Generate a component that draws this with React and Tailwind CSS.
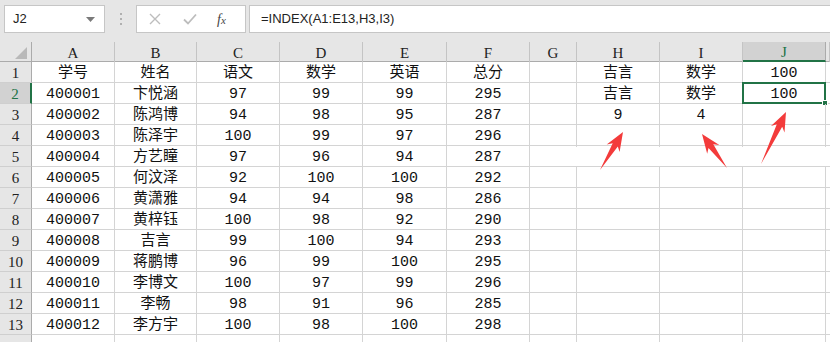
import React from "react";

const cols = ["A", "B", "C", "D", "E", "F", "G", "H", "I", "J", ""];

const rows = [
  ["学号", "姓名", "语文", "数学", "英语", "总分", "", "吉言", "数学", "100"],
  ["400001", "卞悦涵", "97", "99", "99", "295", "", "吉言", "数学", "100"],
  ["400002", "陈鸿博", "94", "98", "95", "287", "", "9", "4", ""],
  ["400003", "陈泽宇", "100", "99", "97", "296", "", "", "", ""],
  ["400004", "方艺瞳", "97", "96", "94", "287", "", "", "", ""],
  ["400005", "何汶泽", "92", "100", "100", "292", "", "", "", ""],
  ["400006", "黄潇雅", "94", "94", "98", "286", "", "", "", ""],
  ["400007", "黄梓钰", "100", "98", "92", "290", "", "", "", ""],
  ["400008", "吉言", "99", "100", "94", "293", "", "", "", ""],
  ["400009", "蒋鹏博", "96", "99", "100", "295", "", "", "", ""],
  ["400010", "李博文", "100", "97", "99", "296", "", "", "", ""],
  ["400011", "李畅", "98", "91", "96", "285", "", "", "", ""],
  ["400012", "李方宇", "100", "98", "100", "298", "", "", "", ""],
  ["", "", "", "", "", "", "", "", "", ""],
];

const gridCols = "grid grid-cols-[32px_83px_82px_83px_83px_84px_83px_47px_83px_83px_83px_1fr]";

// tapered hand-drawn style arrow, tip (tx,ty) tail (sx,sy)
function arrowPoints(tx, ty, sx, sy) {
  const dx = tx - sx;
  const dy = ty - sy;
  const len = Math.hypot(dx, dy);
  const ux = dx / len;
  const uy = dy / len;
  const nx = -uy;
  const ny = ux;
  const head = 17;
  const hw = 7.5;
  const sw = 3;
  const bx = tx - ux * head;
  const by = ty - uy * head;
  const pts = [
    [sx, sy],
    [bx + nx * sw + ux * 2, by + ny * sw + uy * 2],
    [bx + nx * hw - ux * 2, by + ny * hw - uy * 2],
    [tx, ty],
    [bx - nx * hw - ux * 2, by - ny * hw - uy * 2],
    [bx - nx * sw + ux * 2, by - ny * sw + uy * 2],
  ];
  return pts.map((p) => p.map((v) => v.toFixed(1)).join(",")).join(" ");
}

function FormulaBar() {
  return (
    <div className="h-[42px] bg-[#e6e6e6] flex items-start pt-[5px] font-['Liberation_Sans',sans-serif] text-[13px] text-[#222]">
      <div className="ml-[4px] w-[101px] h-[28px] bg-white border border-[#c6c6c6] flex items-center justify-between pl-[8px] pr-[9px]">
        <span>J2</span>
        <svg width="9" height="5" viewBox="0 0 9 5">
          <path d="M0 0 H9 L4.5 5 Z" fill="#7a7a7a" />
        </svg>
      </div>
      <div className="w-[31px] h-[28px] flex flex-col items-center justify-center gap-[3px]">
        <span className="w-[2px] h-[2px] bg-[#b0b0b0]" />
        <span className="w-[2px] h-[2px] bg-[#b0b0b0]" />
        <span className="w-[2px] h-[2px] bg-[#b0b0b0]" />
      </div>
      <div className="w-[110px] h-[28px] bg-white border border-[#c6c6c6] flex items-center">
        <svg className="ml-[12px]" width="12" height="12" viewBox="0 0 12 12">
          <path d="M1 1 L11 11 M11 1 L1 11" stroke="#bdbdbd" strokeWidth="1.4" />
        </svg>
        <svg className="ml-[22px]" width="14" height="12" viewBox="0 0 14 12">
          <path d="M1 6.5 L5 10.5 L13 1.5" stroke="#bdbdbd" strokeWidth="1.8" fill="none" />
        </svg>
        <span className="ml-[20px] font-['Liberation_Serif',serif] italic text-[14px] text-[#444]">
          f<span className="text-[11px]">x</span>
        </span>
      </div>
      <div className="ml-[3px] flex-1 h-[28px] bg-white border border-r-0 border-[#c6c6c6] flex items-center pl-[11px]">
        =INDEX(A1:E13,H3,I3)
      </div>
    </div>
  );
}

function HeaderRow() {
  return (
    <div className={`${gridCols} h-[20px] bg-[#e6e6e6] border-b border-[#ababab] font-['Liberation_Serif',serif] text-[15px] leading-none text-[#222]`}>
      <div className="border-r border-[#ababab] flex items-end justify-end pr-[4px] pb-[3px]">
        <svg width="12" height="12" viewBox="0 0 12 12">
          <path d="M12 0 V12 H0 Z" fill="#b9b9b9" />
        </svg>
      </div>
      {cols.map((c, i) =>
        c === "J" ? (
          <div key={i} className="bg-[#d2d2d2] border-r border-[#ababab] border-b-2 border-b-[#217346] flex items-center justify-center pt-[3px] text-[#217346]">
            {c}
          </div>
        ) : (
          <div key={i} className="border-r border-[#c4c4c4] flex items-center justify-center pt-[3px]">
            {c}
          </div>
        )
      )}
    </div>
  );
}

function Row({ cells, n }) {
  const selected = n === 2;
  return (
    <div className={`${gridCols} h-[21px] leading-none`}>
      <div
        className={`border-b border-[#cfcfcf] flex items-center justify-center pt-[3px] font-['Liberation_Serif',serif] text-[15px] ${
          selected
            ? "bg-[#d2d2d2] border-r-2 border-r-[#217346] text-[#217346]"
            : "bg-[#e6e6e6] border-r border-r-[#ababab] text-[#222]"
        }`}
      >
        {n < 14 ? n : ""}
      </div>
      {cells.map((v, i) => (
        <div key={i} className="relative border-r border-b border-[#d4d4d4] flex items-center justify-center pt-[3px]">
          {v}
          {selected && i === 9 && (
            <div className="absolute -left-[1px] -top-[1px] -right-[1px] -bottom-[1px] border-2 border-[#217346]">
              <div className="absolute -right-[4px] -bottom-[4px] w-[6px] h-[6px] bg-[#217346] border border-white" />
            </div>
          )}
        </div>
      ))}
      <div className="border-b border-[#d4d4d4]" />
    </div>
  );
}

export default function App() {
  return (
    <div className="relative w-[830px] h-[342px] overflow-hidden bg-white">
      <FormulaBar />
      <HeaderRow />
      <div className="font-['Liberation_Mono','Noto_Sans_CJK_SC',monospace] text-[15px] text-[#111]">
        {rows.map((r, i) => (
          <Row key={i} cells={r} n={i + 1} />
        ))}
      </div>
      {/* pasted arrows */}
      <svg className="absolute inset-0 pointer-events-none" width="830" height="342">
        <rect x="576" y="147" width="254" height="19" fill="#fff" />
        <polygon points={arrowPoints(623, 132, 600, 170)} fill="#f33b3b" />
        <polygon points={arrowPoints(702, 134, 727, 168)} fill="#f33b3b" />
        <polygon points={arrowPoints(786, 112, 761, 164)} fill="#f33b3b" />
      </svg>
    </div>
  );
}
